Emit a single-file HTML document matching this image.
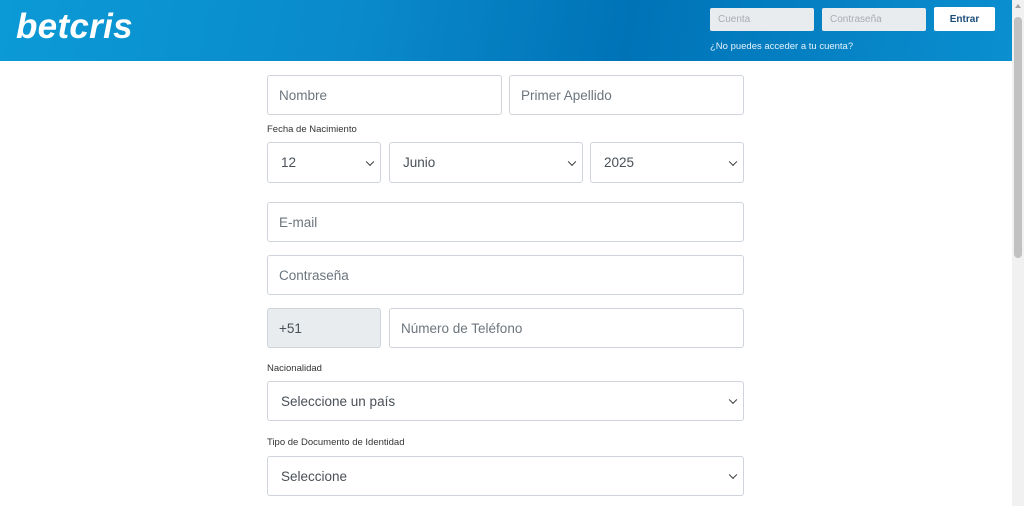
<!DOCTYPE html>
<html><head><meta charset="utf-8"><style>
*{box-sizing:border-box;margin:0;padding:0}
body{width:1024px;height:506px;overflow:hidden;background:#fff;font-family:"Liberation Sans","DejaVu Sans",sans-serif;position:relative}
.hdr{position:absolute;left:0;top:0;width:1012px;height:61px;background:linear-gradient(100deg,#0b9ad6 0%,#0a8acb 35%,#0073b7 62%,#0a8fd0 100%)}
.logo{position:absolute;left:16px;top:7px;color:#fff;font-size:35px;font-weight:bold;font-style:italic;letter-spacing:0.3px}
.hin{position:absolute;top:8px;height:23px;background:#e9ecef;border-radius:2px;font-size:10px;color:#a8adb3;padding:6px 8px}
.btn{position:absolute;left:934px;top:7px;width:61px;height:24px;background:#fff;border-radius:2px;font-size:10px;font-weight:bold;color:#1b4d7a;text-align:center;line-height:25px}
.forgot{position:absolute;left:710px;top:41px;font-size:9.5px;color:#e6f3fb}
.f{position:absolute;border:1px solid #ced4da;border-radius:3px;font-size:13.5px;color:#6c757d;padding-left:11px;display:flex;align-items:center;background:#fff}
.sel{color:#495057;padding-left:13px}
.sel:after{content:"";position:absolute;right:7px;top:50%;width:5px;height:5px;border-right:1.6px solid #333;border-bottom:1.6px solid #333;transform:translateY(-70%) rotate(45deg)}
.lbl{position:absolute;left:267px;font-size:9.5px;color:#333}
.sb{position:absolute;left:1012px;top:0;width:12px;height:506px;background:#f1f1f1}
.th{position:absolute;left:1014px;top:17px;width:8px;height:241px;background:#c1c1c1;border-radius:4px}
.ar{position:absolute;left:1015px;top:4px;border-left:3px solid transparent;border-right:3px solid transparent;border-bottom:4px solid #a3a3a3}
</style></head><body>
<div class="hdr">
<div class="logo">betcris</div>
<div class="hin" style="left:710px;width:104px">Cuenta</div>
<div class="hin" style="left:822px;width:104px">Contraseña</div>
<div class="btn">Entrar</div>
<div class="forgot">¿No puedes acceder a tu cuenta?</div>
</div>
<div class="f" style="left:267px;top:75px;width:235px;height:40px">Nombre</div>
<div class="f" style="left:509px;top:75px;width:235px;height:40px">Primer Apellido</div>
<div class="lbl" style="top:124px">Fecha de Nacimiento</div>
<div class="f sel" style="left:267px;top:142px;width:114px;height:41px;padding-left:13px">12</div>
<div class="f sel" style="left:389px;top:142px;width:194px;height:41px">Junio</div>
<div class="f sel" style="left:590px;top:142px;width:154px;height:41px">2025</div>
<div class="f" style="left:267px;top:202px;width:477px;height:40px">E-mail</div>
<div class="f" style="left:267px;top:255px;width:477px;height:40px">Contraseña</div>
<div class="f" style="left:267px;top:308px;width:114px;height:40px;background:#e9ecef;color:#495057">+51</div>
<div class="f" style="left:389px;top:308px;width:355px;height:40px">Número de Teléfono</div>
<div class="lbl" style="top:363px">Nacionalidad</div>
<div class="f sel" style="left:267px;top:381px;width:477px;height:40px">Seleccione un país</div>
<div class="lbl" style="top:437px">Tipo de Documento de Identidad</div>
<div class="f sel" style="left:267px;top:456px;width:477px;height:40px">Seleccione</div>
<div class="sb"></div><div class="ar"></div><div class="th"></div>
</body></html>
